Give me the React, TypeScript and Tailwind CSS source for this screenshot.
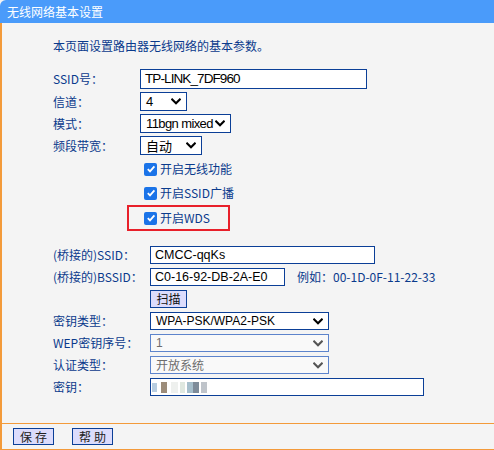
import React from 'react';

const cjk = { fontFamily: '"Noto Sans CJK SC", "Noto Sans", sans-serif' };
const arial = { fontFamily: '"Liberation Sans", Arial, "Noto Sans CJK SC", sans-serif' };

const Chevron = ({ disabled = false }: { disabled?: boolean }) => (
  <svg width="10" height="7" viewBox="0 0 10 7" className="shrink-0">
    <polyline
      points="1.2,1.5 5,5.2 8.8,1.5"
      fill="none"
      stroke={disabled ? '#555' : '#000'}
      strokeWidth="2.2"
      strokeLinecap="square"
    />
  </svg>
);

const Select = ({
  value,
  width,
  h = 'h-[19px]',
  disabled = false,
  big = false,
}: {
  value: string;
  width: string;
  h?: string;
  disabled?: boolean;
  big?: boolean;
}) => (
  <div
    className={`${width} ${h} flex items-center justify-between pl-[5px] pr-[5px] border ${
      disabled ? 'border-[#5d84cc] bg-[#f9f9f9] text-[#6d6d6d]' : 'border-[#0b3f97] bg-white text-black'
    } ${big ? 'text-[13px] tracking-[-0.6px]' : 'text-[12px]'}`}
    style={arial}
  >
    <span className="leading-none whitespace-nowrap">{value}</span>
    <Chevron disabled={disabled} />
  </div>
);

const Check = ({ label }: { label: string }) => (
  <div className="flex items-center gap-[3px]">
    <span className="w-[13px] h-[13px] rounded-[2px] bg-[#1a73e8] flex items-center justify-center">
      <svg width="10" height="10" viewBox="0 0 10 10">
        <polyline points="1.8,5.2 4,7.4 8.4,2.4" fill="none" stroke="#fff" strokeWidth="1.8" />
      </svg>
    </span>
    <span className="text-[12px] text-[#0a3a8c] leading-none">{label}</span>
  </div>
);

const Label = ({ text, w }: { text: string; w: string }) => (
  <div className={`${w} text-[12px] text-[#0a3a8c] leading-none whitespace-nowrap`}>{text}</div>
);

export default function App() {
  return (
    <div className="w-[494px] h-[450px] bg-[#f4f4f4] flex flex-col overflow-hidden" style={cjk}>
      <div className="h-[23px] bg-[#4a9bfa] rounded-tl-[6px] flex items-center pl-[7px] text-white text-[12px]">
        无线网络基本设置
      </div>

      <div className="flex-1 flex flex-col border-l-2 border-[#f39a3a]">
        <div className="flex-1 pl-[51px] pt-[16px] flex flex-col">
          <div className="text-[12px] text-[#0a3a8c] leading-[14px]">本页面设置路由器无线网络的基本参数。</div>

          <div className="mt-[16px] flex flex-col gap-[3px]">
            <div className="flex items-center">
              <Label text="SSID号：" w="w-[87px]" />
              <div
                className="w-[227px] h-[20px] border border-[#0b3f97] bg-white flex items-center pl-[4px] text-[13.5px] tracking-[-0.9px] text-black leading-none"
                style={arial}
              >
                TP-LINK_7DF960
              </div>
            </div>
            <div className="flex items-center">
              <Label text="信道：" w="w-[87px]" />
              <Select value="4" width="w-[47px]" big />
            </div>
            <div className="flex items-center">
              <Label text="模式：" w="w-[87px]" />
              <Select value="11bgn mixed" width="w-[91px]" big />
            </div>
            <div className="flex items-center">
              <Label text="频段带宽：" w="w-[87px]" />
              <div className="w-[62px] h-[19px] flex items-center justify-between pl-[5px] pr-[5px] border border-[#0b3f97] bg-white text-[13px] text-black">
                <span className="leading-none">自动</span>
                <Chevron />
              </div>
            </div>
          </div>

          <div className="mt-[2px] flex flex-col">
            <div className="h-[24px] flex items-center pl-[91px]">
              <Check label="开启无线功能" />
            </div>
            <div className="h-[24px] flex items-center pl-[91px]">
              <Check label="开启SSID广播" />
            </div>
            <div className="ml-[74px] w-[103px] h-[26px] border-2 border-[#e8202a] flex items-center pl-[15px]">
              <Check label="开启WDS" />
            </div>
          </div>

          <div className="mt-[15px] flex flex-col gap-[4px]">
            <div className="flex items-center">
              <Label text="(桥接的)SSID：" w="w-[97px]" />
              <div
                className="w-[225px] h-[18px] border border-[#0b3f97] bg-white flex items-center pl-[4px] text-[12.5px] text-black leading-none"
                style={arial}
              >
                CMCC-qqKs
              </div>
            </div>
            <div className="flex items-center">
              <Label text="(桥接的)BSSID：" w="w-[97px]" />
              <div
                className="w-[135px] h-[18px] border border-[#0b3f97] bg-white flex items-center pl-[4px] text-[12.5px] text-black leading-none"
                style={arial}
              >
                C0-16-92-DB-2A-E0
              </div>
              <span className="ml-[12px] text-[12px] text-[#0a3a8c] leading-none">例如：00-1D-0F-11-22-33</span>
            </div>
            <div className="flex items-center">
              <div className="w-[97px]" />
              <button className="w-[37px] h-[18px] border border-[#0b3f97] bg-[#dcdcfc] text-[12px] text-[#111] leading-none flex items-center justify-center">
                扫描
              </button>
            </div>
            <div className="flex items-center">
              <Label text="密钥类型：" w="w-[97px]" />
              <Select value="WPA-PSK/WPA2-PSK" width="w-[179px]" h="h-[18px]" />
            </div>
            <div className="flex items-center">
              <Label text="WEP密钥序号：" w="w-[97px]" />
              <Select value="1" width="w-[179px]" h="h-[18px]" disabled />
            </div>
            <div className="flex items-center">
              <Label text="认证类型：" w="w-[97px]" />
              <div className="w-[179px] h-[18px] flex items-center justify-between pl-[5px] pr-[5px] border border-[#5d84cc] bg-[#f9f9f9] text-[12px] text-[#6d6d6d]">
                <span className="leading-none">开放系统</span>
                <Chevron disabled />
              </div>
            </div>
            <div className="flex items-center">
              <Label text="密钥：" w="w-[97px]" />
              <div className="w-[274px] h-[18px] border border-[#0b3f97] bg-white flex items-center pl-[1px]">
                <div className="flex items-center blur-[0.6px]">
                  <div className="w-[5px] h-[9px] bg-[#b8cde0]" />
                  <div className="w-[6px] h-[11px] bg-[#9c8c7a] ml-[4px]" />
                  <div className="w-[7px] h-[11px] bg-[#eef0ee] ml-[4px]" />
                  <div className="w-[5px] h-[11px] bg-[#dfe8e0] ml-[2px]" />
                  <div className="w-[6px] h-[11px] bg-[#a6bfcc] ml-[2px]" />
                  <div className="w-[6px] h-[11px] bg-[#7e8c9a]" />
                  <div className="w-[6px] h-[11px] bg-[#bfc4ca] ml-[2px]" />
                </div>
              </div>
            </div>
          </div>
        </div>

        <div className="h-[27px] border-t border-b border-[#f39a3a] flex items-center pl-[11px] gap-[18px]">
          <button className="w-[41px] h-[17px] border border-[#0b3f97] bg-[#dcdcfc] text-[12px] text-[#222] leading-none flex items-center justify-center tracking-[3px] pl-[3px]">
            保存
          </button>
          <button className="w-[41px] h-[17px] border border-[#0b3f97] bg-[#dcdcfc] text-[12px] text-[#222] leading-none flex items-center justify-center tracking-[3px] pl-[3px]">
            帮助
          </button>
        </div>
      </div>
    </div>
  );
}
